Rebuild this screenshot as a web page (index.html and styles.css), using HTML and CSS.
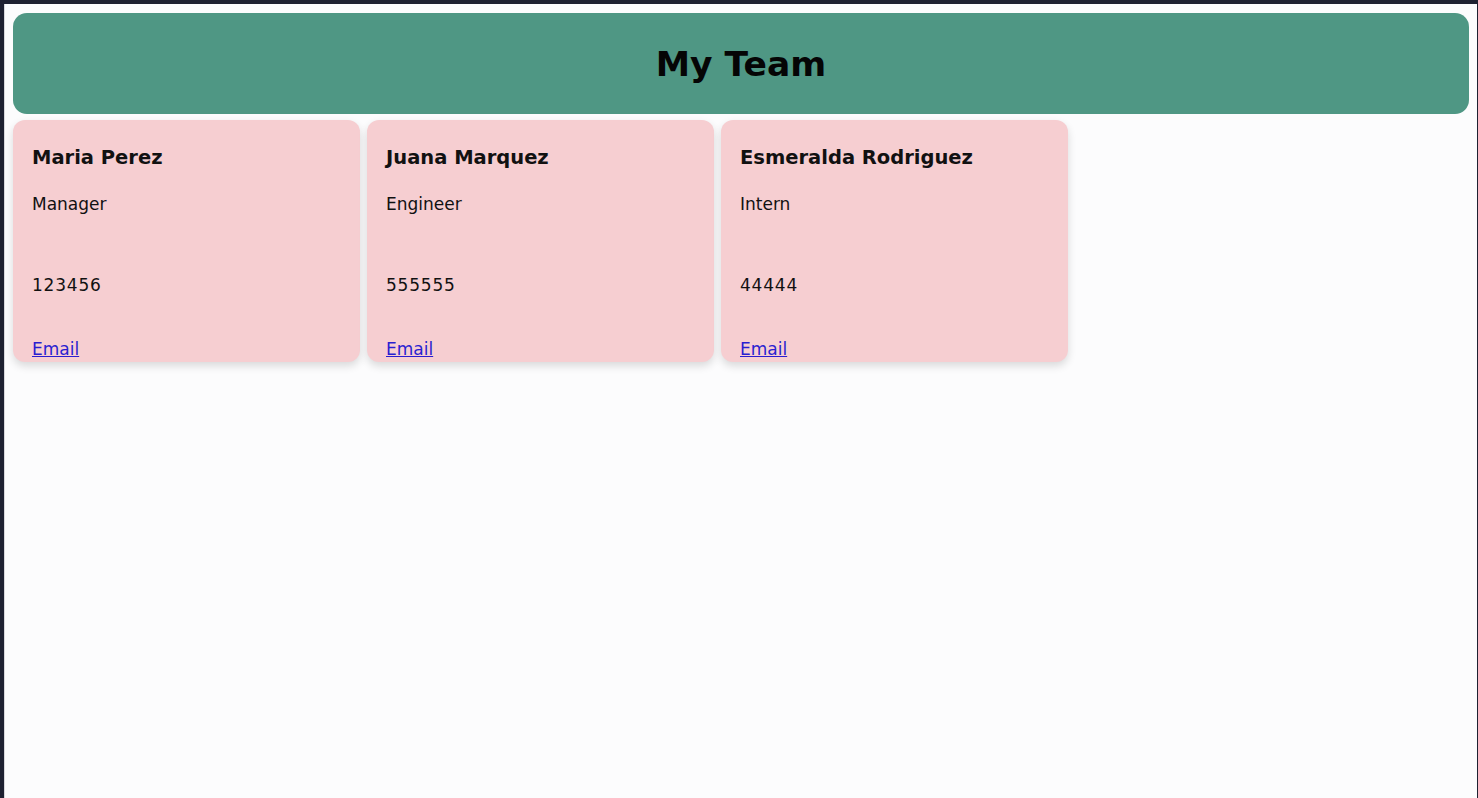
FILE: index.html
```html
<!DOCTYPE html>
<html lang="en">
<head>
<meta charset="utf-8">
<title>My Team</title>
<link rel="stylesheet" href="styles.css">
</head>
<body>
<div class="frame">
  <header class="banner">
    <h1 class="banner-title">My Team</h1>
  </header>
  <main class="team">
    <article class="card">
      <h3 class="card-name">Maria Perez</h3>
      <p class="card-role">Manager</p>
      <p class="card-num">123456</p>
      <a class="card-link" href="#">Email</a>
    </article>
    <article class="card">
      <h3 class="card-name">Juana Marquez</h3>
      <p class="card-role">Engineer</p>
      <p class="card-num">555555</p>
      <a class="card-link" href="#">Email</a>
    </article>
    <article class="card">
      <h3 class="card-name">Esmeralda Rodriguez</h3>
      <p class="card-role">Intern</p>
      <p class="card-num">44444</p>
      <a class="card-link" href="#">Email</a>
    </article>
  </main>
</div>
</body>
</html>
```
FILE: styles.css
```css
html, body {
  margin: 0;
  padding: 0;
  height: 100%;
  background: #1e2131;
}
body {
  font-family: "DejaVu Sans", Verdana, sans-serif;
  color: #111;
}
.frame {
  box-sizing: border-box;
  margin-top: 4px;
  margin-left: 4px;
  margin-right: 1px;
  height: calc(100% - 4px);
  background: #fcfcfd;
  border-left: 1px solid #d8d8dc;
  padding: 9px 8px 0 8px;
}
.banner {
  height: 101px;
  background: #4f9784;
  border-radius: 14px;
  display: flex;
  align-items: center;
  justify-content: center;
}
.banner-title {
  margin: 0;
  font-size: 34.5px;
  font-weight: bold;
  color: #050505;
  line-height: 1;
  transform: translateY(1px);
}
.team {
  display: flex;
  gap: 7px;
  margin-top: 6px;
}
.card {
  width: 347px;
  box-sizing: border-box;
  background: #f6ced1;
  border-radius: 12px;
  padding: 26px 19px 3px 19px;
  box-shadow: 0 4px 8px rgba(0, 0, 0, 0.14);
  display: flex;
  flex-direction: column;
  align-items: flex-start;
}
.card-name {
  margin: 0;
  font-size: 19.5px;
  line-height: 24px;
  font-weight: bold;
}
.card-role {
  margin: 24px 0 0 0;
  font-size: 17px;
  line-height: 20px;
}
.card-num {
  margin: 61px 0 0 0;
  font-size: 17px;
  line-height: 20px;
  letter-spacing: 0.8px;
}
.card-link {
  margin-top: 44px;
  font-size: 17px;
  line-height: 20px;
  color: #2a1ed0;
}
```
